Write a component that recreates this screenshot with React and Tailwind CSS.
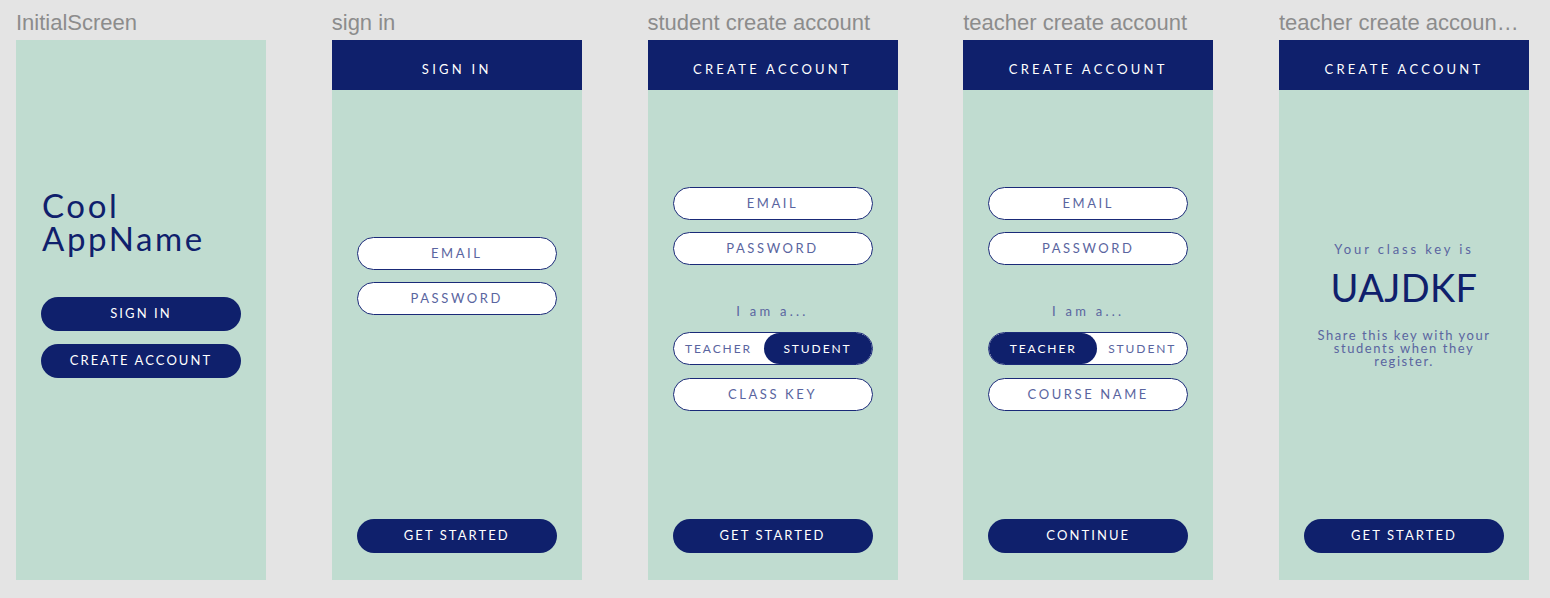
const NAVY = "bg-[#0f206c]";

const Label = ({ children, className = "" }) => (
  <div
    className={`h-[40px] pt-[10px] text-[22px] leading-[26px] text-[#8c8c8c] whitespace-nowrap overflow-hidden text-ellipsis font-['Liberation_Sans',Arial,sans-serif] ${className}`}
  >
    {children}
  </div>
);

const Frame = ({ children }) => (
  <div className="h-[540px] w-[250px] bg-[#c0dcd0] flex flex-col">{children}</div>
);

const Header = ({ children }) => (
  <div className={`${NAVY} h-[50px] pt-[10px] flex items-center justify-center text-white text-[13px] tracking-[0.25em] shrink-0`}>
    {children}
  </div>
);

const Field = ({ children, className = "" }) => (
  <div
    className={`mx-auto w-[200px] h-[33px] rounded-full border-[1.5px] border-[#1a2a78] bg-white flex items-center justify-center text-[13px] tracking-[0.2em] text-[#5a65a0] ${className}`}
  >
    {children}
  </div>
);

const Button = ({ children, className = "" }) => (
  <button
    className={`mx-auto w-[200px] h-[34px] rounded-full ${NAVY} text-white text-[13px] tracking-[0.16em] flex items-center justify-center ${className}`}
  >
    {children}
  </button>
);

const Toggle = ({ selected }) => (
  <div className="mx-auto w-[200px] h-[33px] rounded-full border-[1.5px] border-[#1a2a78] bg-white flex items-stretch overflow-hidden text-[12px] tracking-[0.16em]">
    {selected === "teacher" ? (
      <>
        <div className={`${NAVY} w-[108px] rounded-full text-white flex items-center justify-center`}>TEACHER</div>
        <div className="flex-1 text-[#5a65a0] flex items-center justify-center">STUDENT</div>
      </>
    ) : (
      <>
        <div className="flex-1 text-[#5a65a0] flex items-center justify-center">TEACHER</div>
        <div className={`${NAVY} w-[108px] rounded-full text-white flex items-center justify-center`}>STUDENT</div>
      </>
    )}
  </div>
);

const IamA = () => (
  <div className="mt-[36px] mb-[11px] text-center text-[13px] tracking-[0.25em] text-[#5a65a0] leading-[20px]">
    I am a...
  </div>
);

export default function App() {
  return (
    <div className="w-[1550px] h-[598px] bg-[#e4e4e4] flex gap-[65.75px] pl-[16px] font-['Lato','Liberation_Sans',sans-serif]">
      <div className="w-[250px]">
        <Label>InitialScreen</Label>
        <Frame>
          <div className="pt-[149px] pl-[26px] text-[33px] tracking-[0.08em] text-[#0f206c]">
            <div className="h-[33px] leading-[33px]">Cool</div>
            <div className="h-[33px] leading-[33px]">AppName</div>
          </div>
          <Button className="mt-[42px]">SIGN IN</Button>
          <Button className="mt-[13px]">CREATE ACCOUNT</Button>
        </Frame>
      </div>

      <div className="w-[250px]">
        <Label>sign in</Label>
        <Frame>
          <Header>SIGN IN</Header>
          <Field className="mt-[147px]">EMAIL</Field>
          <Field className="mt-[12px]">PASSWORD</Field>
          <Button className="mt-auto mb-[27px]">GET STARTED</Button>
        </Frame>
      </div>

      <div className="w-[250px]">
        <Label>student create account</Label>
        <Frame>
          <Header>CREATE ACCOUNT</Header>
          <Field className="mt-[97px]">EMAIL</Field>
          <Field className="mt-[12px]">PASSWORD</Field>
          <IamA />
          <Toggle selected="student" />
          <Field className="mt-[13px]">CLASS KEY</Field>
          <Button className="mt-auto mb-[27px]">GET STARTED</Button>
        </Frame>
      </div>

      <div className="w-[250px]">
        <Label>teacher create account</Label>
        <Frame>
          <Header>CREATE ACCOUNT</Header>
          <Field className="mt-[97px]">EMAIL</Field>
          <Field className="mt-[12px]">PASSWORD</Field>
          <IamA />
          <Toggle selected="teacher" />
          <Field className="mt-[13px]">COURSE NAME</Field>
          <Button className="mt-auto mb-[27px]">CONTINUE</Button>
        </Frame>
      </div>

      <div className="w-[250px]">
        <Label className="max-w-[242px]">teacher create account 2</Label>
        <Frame>
          <Header>CREATE ACCOUNT</Header>
          <div className="mt-[149px] text-center text-[13px] tracking-[0.22em] text-[#5a65a0] leading-[20px]">
            Your class key is
          </div>
          <div className="mt-[6px] text-center text-[38px] leading-[44px] tracking-[0.01em] text-[#0f206c]">
            UAJDKF
          </div>
          <div className="mt-[20px] mx-auto w-[200px] text-center text-[13px] tracking-[0.12em] text-[#5a65a0] leading-[13px]">
            Share this key with your students when they register.
          </div>
          <Button className="mt-auto mb-[27px]">GET STARTED</Button>
        </Frame>
      </div>
    </div>
  );
}
